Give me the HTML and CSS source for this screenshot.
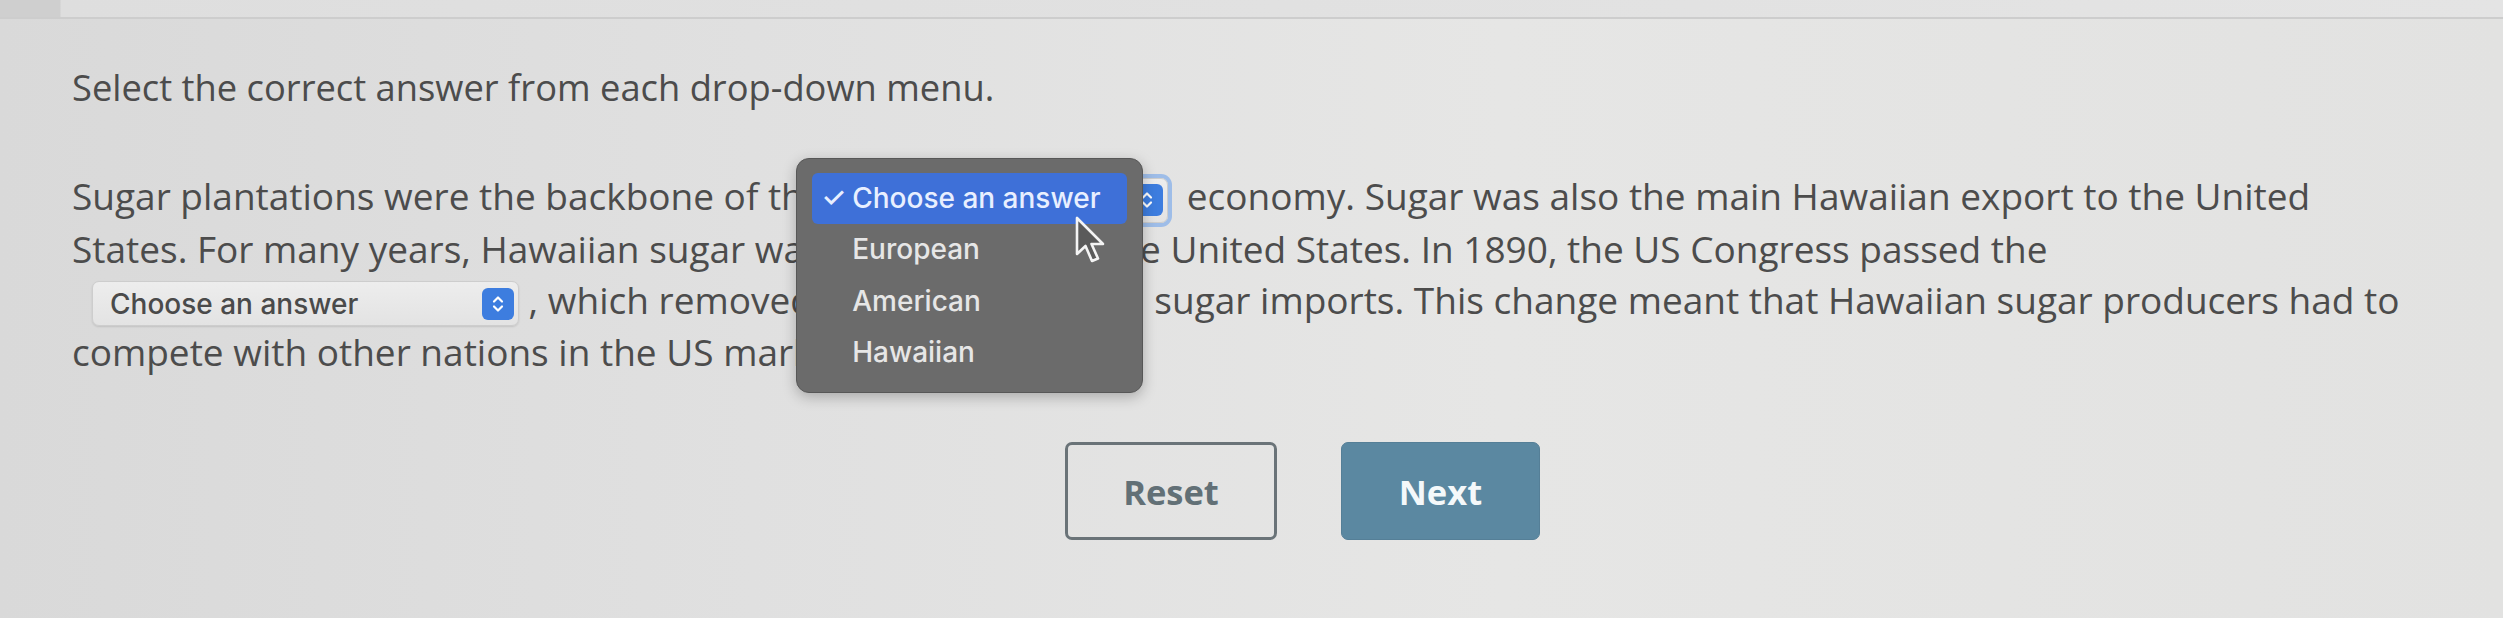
FILE: index.html
```html
<!DOCTYPE html>
<html lang="en">
<head>
<meta charset="utf-8">
<title>Select the correct answer</title>
<link rel="stylesheet" href="styles.css">
</head>
<body>
<div class="topbar"></div>
<main class="question">
  <p class="instruction">Select the correct answer from each drop-down menu.</p>
  <p class="passage">Sugar plantations were the backbone of the <span class="dd dd-one"><span class="dd-box dd-focus"><span class="dd-label">Choose an answer</span><span class="dd-arrow"><svg viewBox="0 0 32 32" width="32" height="32"><path d="M12 13.5 L16 9.5 L20 13.5 M12 18.5 L16 22.5 L20 18.5" fill="none" stroke="#fff" stroke-width="2.2" stroke-linecap="round" stroke-linejoin="round"/></svg></span></span><span class="menu"><span class="menu-item selected"><span class="check">✓</span>Choose an answer</span><span class="menu-item">European</span><span class="menu-item">American</span><span class="menu-item">Hawaiian</span><svg class="cursor" viewBox="0 0 30 48" width="30" height="48"><path d="M2 2 L2 38 L10.5 30 L17 45 L23 42.5 L16.5 28 L28 28 Z" fill="#5a5a5a" stroke="#f4f4f4" stroke-width="2.6" stroke-linejoin="round"/></svg></span></span> economy. Sugar was also the main Hawaiian export to the United<br>States. For many years, Hawaiian sugar was<span class="ws"> sold tax-free in </span>the United States. In 1890, the US Congress passed the<br><span class="dd dd-two"><span class="dd-box"><span class="dd-label">Choose an answer</span><span class="dd-arrow"><svg viewBox="0 0 32 32" width="32" height="32"><path d="M12 13.5 L16 9.5 L20 13.5 M12 18.5 L16 22.5 L20 18.5" fill="none" stroke="#fff" stroke-width="2.2" stroke-linecap="round" stroke-linejoin="round"/></svg></span></span></span> , which removed<span class="ws3"> the tax on foreign </span>sugar imports. This change meant that Hawaiian sugar producers had to<br>compete with other nations in the US market.</p>
  <div class="actions">
    <button class="btn btn-reset" type="button">Reset</button>
    <button class="btn btn-next" type="button">Next</button>
  </div>
</main>
</body>
</html>
```

FILE: styles.css
```css
html, body {
  margin: 0;
  padding: 0;
}
body {
  width: 2503px;
  height: 618px;
  overflow: hidden;
  background: linear-gradient(90deg, #d9d9d9 0%, #e0e0e0 30%, #e6e6e5 60%, #e2e2e1 100%);
  font-family: "Open Sans", "Liberation Sans", sans-serif;
  color: #4c4c4c;
}
.topbar {
  height: 17px;
  border-bottom: 2px solid #cdcdcd;
  background: linear-gradient(90deg, #cfcfcf 0, #cfcfcf 60px, #dedede 61px, #e4e4e4 100%);
}
.question {
  padding: 0 0 0 72px;
}
.instruction {
  margin: 43px 0 0 0;
  font-size: 36.3px;
  line-height: 51px;
  white-space: nowrap;
}
.passage {
  margin: 57px 0 0 0;
  font-size: 37px;
  line-height: 51px;
  white-space: nowrap;
}
.ws {
  word-spacing: 1.5px;
}
.ws3 {
  word-spacing: 3.2px;
}
.dd {
  display: inline-block;
  position: relative;
  vertical-align: middle;
  line-height: normal;
}
.dd-one {
  margin-right: 9px;
}
.dd-two {
  margin-left: 20px;
}
.dd-box {
  display: flex;
  align-items: center;
  justify-content: space-between;
  box-sizing: border-box;
  height: 45px;
  padding: 0 4px 0 17px;
  border: 1px solid #cdcdcd;
  border-radius: 7px;
  background: linear-gradient(#ededed, #e3e3e3);
  box-shadow: 0 1px 2px rgba(0,0,0,0.12);
  font-family: Inter, "Liberation Sans", sans-serif;
  font-weight: 500;
  font-size: 28px;
  color: #4a4a4a;
}
.dd-one .dd-box { width: 334px; }
.dd-two .dd-box { width: 427px; }
.dd-focus {
  box-shadow: 0 0 0 4px #9ebde8;
}
.dd-arrow {
  display: flex;
  width: 32px;
  height: 32px;
  border-radius: 6px;
  background: #3d7ddf;
}
.menu {
  position: absolute;
  left: -38px;
  top: -20px;
  width: 347px;
  height: 235px;
  box-sizing: border-box;
  padding: 14px 15px;
  display: flex;
  flex-direction: column;
  border-radius: 13px;
  background: #6b6b6b;
  border: 1px solid #575757;
  box-shadow: 0 4px 14px rgba(0,0,0,0.25);
  font-family: Inter, "Liberation Sans", sans-serif;
  font-weight: 500;
  font-size: 28px;
  color: #e6e6e6;
  z-index: 5;
}
.menu-item {
  display: flex;
  align-items: center;
  height: 52px;
  padding-left: 40px;
  border-radius: 6px;
  position: relative;
}
.menu-item.selected {
  background: #3e70d8;
  color: #e8efff;
}
.check {
  position: absolute;
  left: 9px;
  top: 50%;
  transform: translateY(-52%);
  font-size: 28px;
}
.cursor {
  position: absolute;
  left: 278px;
  top: 57px;
}
.actions {
  display: flex;
  justify-content: center;
  gap: 64px;
  margin: 65px 0 0 0;
  padding-left: 30px;
}
.btn {
  box-sizing: border-box;
  height: 98px;
  border-radius: 7px;
  font-family: "Open Sans", "Liberation Sans", sans-serif;
  font-weight: 700;
  font-size: 34.5px;
  cursor: pointer;
}
.btn-reset {
  width: 212px;
  background: transparent;
  border: 3px solid #6a7378;
  color: #627076;
}
.btn-next {
  width: 199px;
  background: #5b88a1;
  border: 1px solid #557f97;
  color: #f4f8fa;
}
```
